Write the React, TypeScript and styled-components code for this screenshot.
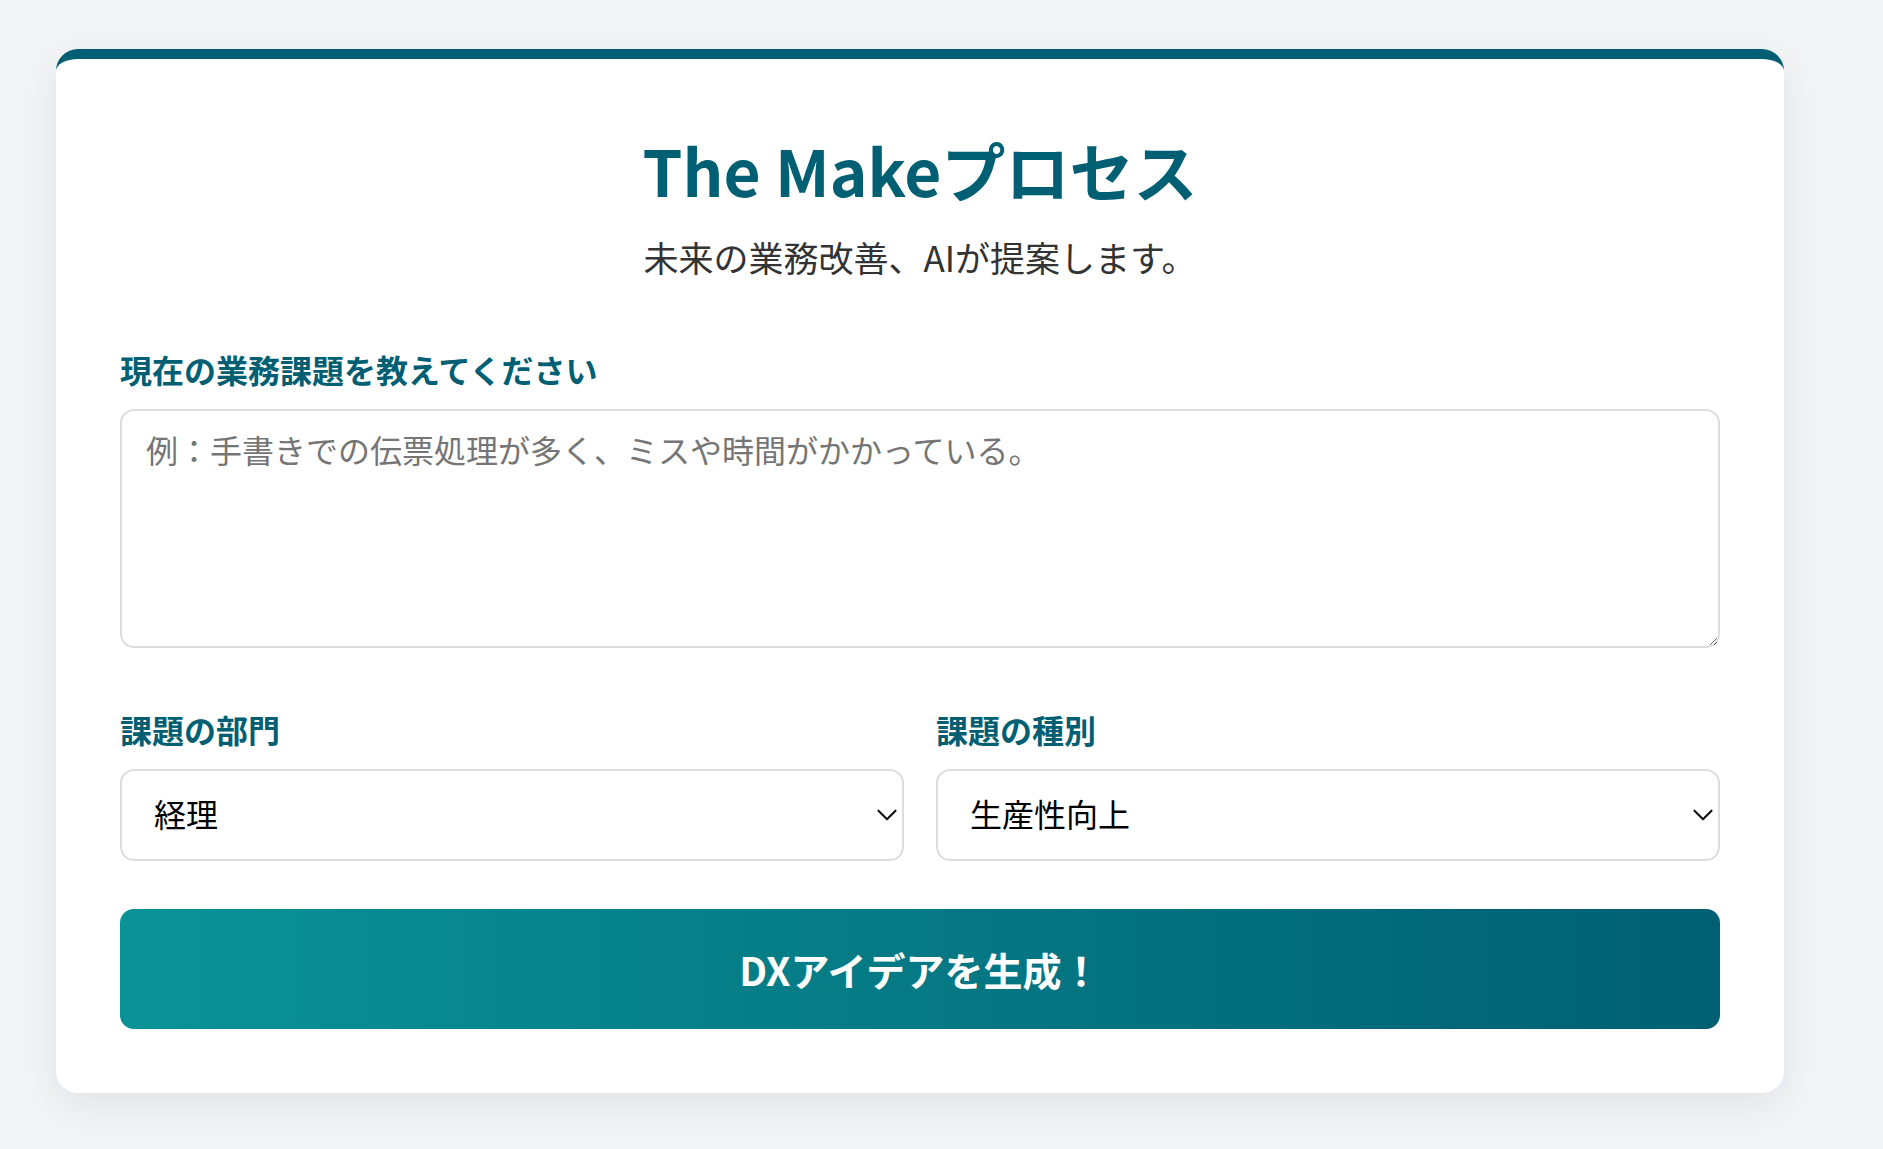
import styled, { createGlobalStyle } from 'styled-components';
import { ChevronDown } from 'lucide-react';

const GlobalStyle = createGlobalStyle`
    body {
        margin: 0;
        background: #f3f4f6;
        font-family: 'Noto Sans CJK JP', 'Noto Sans', sans-serif;
    }
`;

const Page = styled.div`
    min-height: 1149px;
    padding: 49px 0 58px 56px;
    box-sizing: border-box;
`;

const Card = styled.main`
    width: 1728px;
    box-sizing: border-box;
    background: #ffffff;
    border-top: 10px solid #005f73;
    border-radius: 22px;
    padding: 72px 64px 64px;
    box-shadow: 0 12px 40px rgba(15, 23, 42, 0.08);
    display: flex;
    flex-direction: column;
`;

const Header = styled.header`
    display: flex;
    flex-direction: column;
    align-items: center;
    gap: 23px;
    margin-bottom: 62px;
`;

const Title = styled.h1`
    margin: 0;
    font-size: 64px;
    line-height: 1.2;
    font-weight: 700;
    color: #005f73;
`;

const Subtitle = styled.p`
    margin: 0;
    font-size: 35px;
    line-height: 1.5;
    color: #333333;
`;

const Field = styled.div`
    display: flex;
    flex-direction: column;
    gap: 16px;
    min-width: 0;
`;

const Label = styled.label`
    font-size: 32px;
    line-height: 1.5;
    font-weight: 700;
    color: #005f73;
`;

const TextArea = styled.textarea`
    box-sizing: border-box;
    height: 239px;
    padding: 14px 24px;
    border: 2px solid #dddddd;
    border-radius: 14px;
    font-family: inherit;
    font-size: 32px;
    line-height: 1.5;
    color: #222222;
    resize: vertical;
    outline: none;

    &::placeholder {
        color: #757575;
    }
`;

const Row = styled.div`
    display: grid;
    grid-template-columns: 1fr 1fr;
    gap: 32px;
    margin-top: 57px;
`;

const SelectWrap = styled.div`
    position: relative;
`;

const Select = styled.select`
    box-sizing: border-box;
    width: 100%;
    height: 92px;
    padding: 0 48px 4px 32px;
    border: 2px solid #dddddd;
    border-radius: 14px;
    background: #ffffff;
    font-family: inherit;
    font-size: 32px;
    color: #000000;
    appearance: none;
    outline: none;
`;

const Arrow = styled(ChevronDown)`
    position: absolute;
    right: 0;
    top: 50%;
    transform: translateY(-50%);
    pointer-events: none;
    color: #111111;
`;

const Submit = styled.button`
    margin-top: 48px;
    height: 120px;
    border: none;
    border-radius: 14px;
    background: linear-gradient(90deg, #0a9396 0%, #005f73 100%);
    color: #ffffff;
    font-family: inherit;
    font-size: 39px;
    font-weight: 700;
    cursor: pointer;
`;

const departments = ['経理', '人事', '営業', '総務', '製造'];
const categories = ['生産性向上', 'コスト削減', '品質改善', '顧客満足度向上'];

export default function App() {
    return (
        <>
            <GlobalStyle />
            <Page>
                <Card>
                    <Header>
                        <Title>The Makeプロセス</Title>
                        <Subtitle>未来の業務改善、AIが提案します。</Subtitle>
                    </Header>

                    <Field>
                        <Label htmlFor="issue">現在の業務課題を教えてください</Label>
                        <TextArea
                            id="issue"
                            placeholder="例：手書きでの伝票処理が多く、ミスや時間がかかっている。"
                        />
                    </Field>

                    <Row>
                        <Field>
                            <Label htmlFor="dept">課題の部門</Label>
                            <SelectWrap>
                                <Select id="dept" defaultValue="経理">
                                    {departments.map((d) => (
                                        <option key={d}>{d}</option>
                                    ))}
                                </Select>
                                <Arrow size={34} strokeWidth={1.5} />
                            </SelectWrap>
                        </Field>
                        <Field>
                            <Label htmlFor="kind">課題の種別</Label>
                            <SelectWrap>
                                <Select id="kind" defaultValue="生産性向上">
                                    {categories.map((c) => (
                                        <option key={c}>{c}</option>
                                    ))}
                                </Select>
                                <Arrow size={34} strokeWidth={1.5} />
                            </SelectWrap>
                        </Field>
                    </Row>

                    <Submit type="button">DXアイデアを生成！</Submit>
                </Card>
            </Page>
        </>
    );
}
